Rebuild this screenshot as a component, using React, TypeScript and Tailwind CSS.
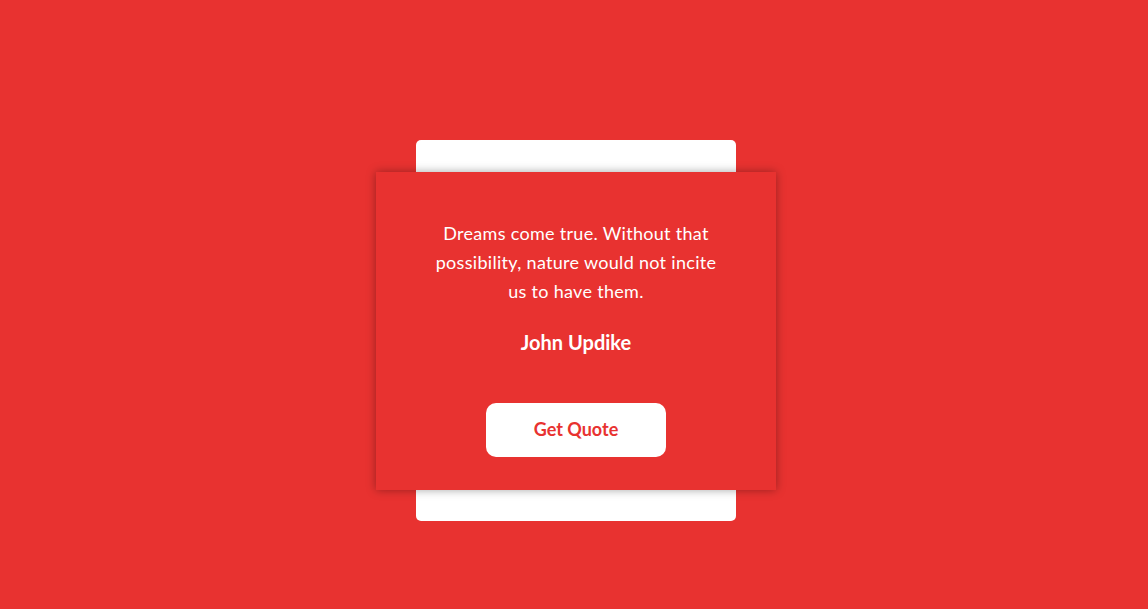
export default function App() {
  return (
    <div className="min-h-screen w-full bg-[#e83230] flex justify-center pt-[140px] pl-[4px] font-['Lato','Liberation_Sans',sans-serif]">
      <div className="grid place-items-center h-fit">
        <div className="[grid-area:1/1] w-[320px] h-[381px] bg-white rounded-[5px]" />
        <div className="[grid-area:1/1] w-[400px] h-[318px] bg-[#e83230] shadow-[0_0_9px_rgba(0,0,0,0.35)] flex flex-col items-center pt-[47px]">
          <p className="text-white text-[18px] leading-[29px] text-center tracking-[0.3px]">
            Dreams come true. Without that
            <br />
            possibility, nature would not incite
            <br />
            us to have them.
          </p>
          <p className="text-white text-[20px] font-bold leading-[28px] mt-[22px]">John Updike</p>
          <button className="mt-[47px] w-[180px] h-[54px] bg-white rounded-[10px] text-[#e83230] text-[18px] font-bold">
            Get Quote
          </button>
        </div>
      </div>
    </div>
  );
}
